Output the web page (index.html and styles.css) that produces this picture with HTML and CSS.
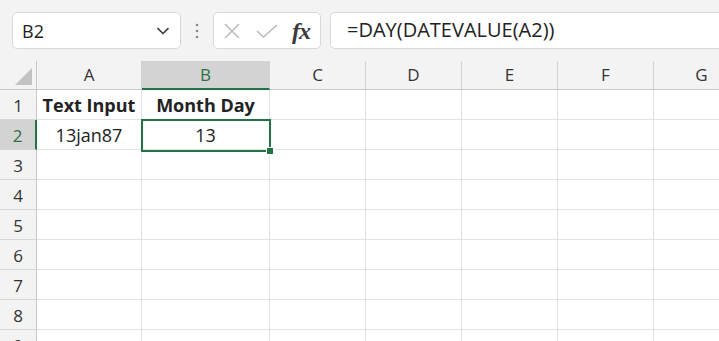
FILE: index.html
```html
<!DOCTYPE html>
<html lang="en">
<head>
    <meta charset="UTF-8">
    <meta name="viewport" content="width=device-width, initial-scale=1.0">
    <title>DAY of DATEVALUE</title>
    <link rel="stylesheet" href="styles.css">
</head>
<body>

<div class="formula-bar">
    <div class="name-box">
        <span>B2</span>
        <svg class="chevron" width="14" height="8" viewBox="0 0 14 8">
            <path d="M1.5 1.2 L7 6.5 L12.5 1.2" fill="none" stroke="#3a3a3a" stroke-width="1.6"/>
        </svg>
    </div>
    <div class="grip">
        <svg width="4" height="16" viewBox="0 0 4 16">
            <circle cx="2" cy="2" r="1.3" fill="#8a8a8a"/>
            <circle cx="2" cy="8" r="1.3" fill="#8a8a8a"/>
            <circle cx="2" cy="14" r="1.3" fill="#8a8a8a"/>
        </svg>
    </div>
    <div class="fx-box">
        <svg class="icon-cancel" width="18" height="16" viewBox="0 0 18 16">
            <path d="M2 1 L16 15 M16 1 L2 15" stroke="#b9b9b9" stroke-width="1.5" fill="none"/>
        </svg>
        <svg class="icon-enter" width="22" height="14" viewBox="0 0 22 14">
            <path d="M1 7 L7.5 13 L21 1" stroke="#b9b9b9" stroke-width="1.5" fill="none"/>
        </svg>
        <span class="fx">fx</span>
    </div>
    <div class="formula-input">=DAY(DATEVALUE(A2))</div>
</div>

<div class="sheet">
    <div class="corner"><span class="corner-tri"></span></div>
    <div class="col-head">A</div>
    <div class="col-head active">B</div>
    <div class="col-head">C</div>
    <div class="col-head">D</div>
    <div class="col-head">E</div>
    <div class="col-head">F</div>
    <div class="col-head">G</div>

    <div class="row-head">1</div>
    <div class="cell bold">Text Input</div>
    <div class="cell bold">Month Day</div>
    <div class="cell"></div><div class="cell"></div><div class="cell"></div><div class="cell"></div><div class="cell"></div>

    <div class="row-head active">2</div>
    <div class="cell">13jan87</div>
    <div class="cell">13</div>
    <div class="cell"></div><div class="cell"></div><div class="cell"></div><div class="cell"></div><div class="cell"></div>

    <div class="row-head">3</div>
    <div class="cell"></div><div class="cell"></div><div class="cell"></div><div class="cell"></div><div class="cell"></div><div class="cell"></div><div class="cell"></div>
    <div class="row-head">4</div>
    <div class="cell"></div><div class="cell"></div><div class="cell"></div><div class="cell"></div><div class="cell"></div><div class="cell"></div><div class="cell"></div>
    <div class="row-head">5</div>
    <div class="cell"></div><div class="cell"></div><div class="cell"></div><div class="cell"></div><div class="cell"></div><div class="cell"></div><div class="cell"></div>
    <div class="row-head">6</div>
    <div class="cell"></div><div class="cell"></div><div class="cell"></div><div class="cell"></div><div class="cell"></div><div class="cell"></div><div class="cell"></div>
    <div class="row-head">7</div>
    <div class="cell"></div><div class="cell"></div><div class="cell"></div><div class="cell"></div><div class="cell"></div><div class="cell"></div><div class="cell"></div>
    <div class="row-head">8</div>
    <div class="cell"></div><div class="cell"></div><div class="cell"></div><div class="cell"></div><div class="cell"></div><div class="cell"></div><div class="cell"></div>
    <div class="row-head">9</div>
    <div class="cell"></div><div class="cell"></div><div class="cell"></div><div class="cell"></div><div class="cell"></div><div class="cell"></div><div class="cell"></div>

    <!-- active cell B2 -->
    <div class="selection"><span class="fill-handle"></span></div>
</div>

</body>
</html>
```

FILE: styles.css
```css
body {
    margin: 0;
    width: 719px;
    height: 341px;
    overflow: hidden;
    background: #fff;
    font-family: "Open Sans", "Liberation Sans", sans-serif;
    color: #222;
}

.formula-bar {
    display: flex;
    height: 61px;
    padding: 12px 0 0 12px;
    box-sizing: border-box;
    background: #f3f3f3;
}

.name-box {
    display: flex;
    align-items: center;
    justify-content: space-between;
    width: 169px;
    height: 37px;
    box-sizing: border-box;
    padding: 0 10px 0 9px;
    background: #fff;
    border: 1px solid #d9d9d9;
    border-radius: 5px;
    font-size: 18px;
}

.grip {
    width: 32px;
    height: 37px;
    display: flex;
    align-items: center;
    justify-content: center;
}

.fx-box {
    display: flex;
    align-items: center;
    width: 108px;
    height: 37px;
    box-sizing: border-box;
    padding-left: 9px;
    background: #fff;
    border: 1px solid #d9d9d9;
    border-radius: 5px;
}

.icon-enter {
    margin-left: 15px;
}

.fx {
    margin-left: 14px;
    font-family: "Liberation Serif", serif;
    font-style: italic;
    font-weight: bold;
    font-size: 24px;
    color: #3a3a3a;
    letter-spacing: -1px;
    line-height: 1;
}

.formula-input {
    flex: 1;
    height: 37px;
    box-sizing: border-box;
    margin-left: 9px;
    padding-left: 16px;
    background: #fff;
    border: 1px solid #d9d9d9;
    border-right: 0;
    border-radius: 5px 0 0 5px;
    font-size: 20px;
    line-height: 34px;
}

.sheet {
    position: relative;
    display: grid;
    grid-template-columns: 37px 105px 128px 96px 96px 96px 96px 96px;
    grid-template-rows: 29px repeat(9, 30px);
}

.corner,
.col-head,
.row-head {
    background: #f3f3f3;
    box-sizing: border-box;
    color: #333;
}

.corner {
    position: relative;
    border-right: 1px solid #c8c8c8;
    border-bottom: 1px solid #c8c8c8;
}

.corner-tri {
    position: absolute;
    right: 4px;
    bottom: 4px;
    width: 0;
    height: 0;
    border-left: 17px solid transparent;
    border-bottom: 17px solid #c3c3c3;
}

.col-head {
    text-align: center;
    font-size: 17px;
    line-height: 28px;
    border-right: 1px solid #d2d2d2;
    border-bottom: 1px solid #c8c8c8;
}

.col-head.active {
    background: #d3d3d3;
    color: #2f6e48;
    border-bottom: 2px solid #217346;
}

.row-head {
    text-align: center;
    font-size: 17px;
    line-height: 31px;
    border-right: 1px solid #c8c8c8;
    border-bottom: 1px solid #d6d6d6;
}

.row-head.active {
    background: #d3d3d3;
    color: #2f6e48;
    border-right: 2px solid #217346;
}

.cell {
    box-sizing: border-box;
    border-right: 1px solid #e2e2e2;
    border-bottom: 1px solid #e2e2e2;
    text-align: center;
    font-size: 18px;
    line-height: 31px;
    white-space: nowrap;
    overflow: hidden;
}

.cell.bold {
    font-weight: bold;
}

.selection {
    position: absolute;
    left: 141px;
    top: 58px;
    width: 130px;
    height: 33px;
    box-sizing: border-box;
    border: 2px solid #217346;
}

.fill-handle {
    position: absolute;
    right: -5px;
    bottom: -5px;
    width: 6px;
    height: 6px;
    background: #217346;
    border: 1px solid #fff;
}
```
